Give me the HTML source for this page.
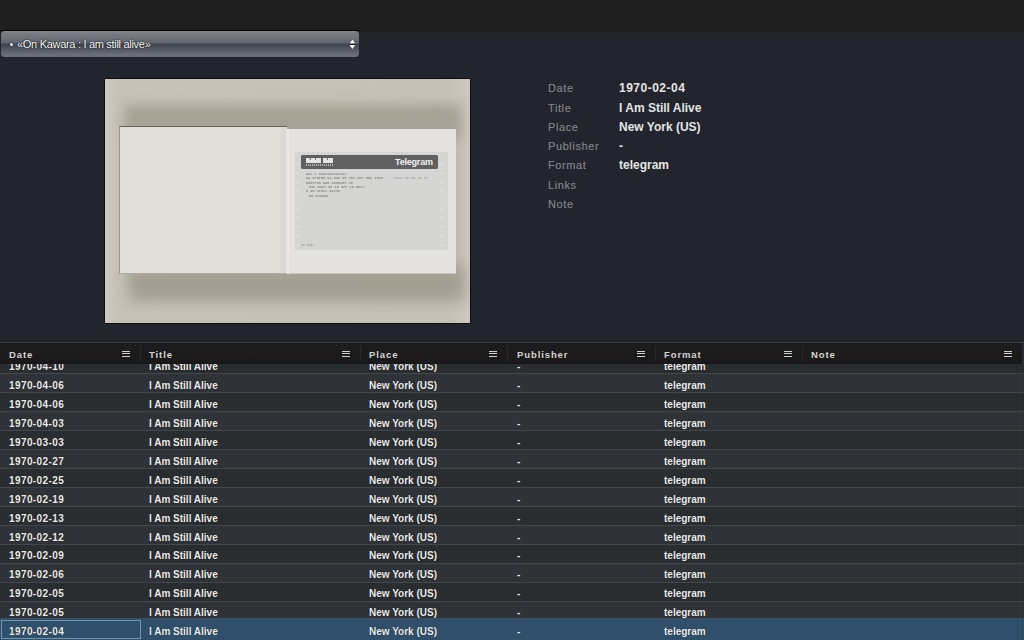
<!DOCTYPE html>
<html><head><meta charset="utf-8">
<style>
*{margin:0;padding:0;box-sizing:border-box}
html,body{width:1024px;height:640px;overflow:hidden;background:#22252d;font-family:"Liberation Sans",sans-serif}
#top{position:absolute;left:0;top:0;width:1024px;height:32px;background:#1f1f1f}
#topline{position:absolute;left:0;top:30px;width:359px;height:1px;background:#000}
#sel{position:absolute;left:1px;top:31px;width:358px;height:26px;border-radius:4px;
 background:linear-gradient(to bottom,#8a8c91 0px,#7b7e85 2px,#6c7079 8px,#5d626c 12px,#3f4450 13px,#444a55 15px,#5a5f69 20px,#6b7078 24px,#6b7078 26px);}
#sel .bul{position:absolute;left:9px;top:11.5px;width:3px;height:3px;border-radius:50%;background:#fff;box-shadow:0 0 1.5px #000}
#sel .t{position:absolute;left:16px;top:7px;font-size:11px;color:#f4f4f4;text-shadow:0 0 1.5px rgba(0,0,0,1),0 0 1px rgba(0,0,0,0.8);color:#fff;white-space:nowrap;letter-spacing:-0.3px;line-height:13px}
#sel .arr{position:absolute;left:347px;top:7px;width:9px;height:12px;filter:drop-shadow(0 0 0.6px rgba(0,0,0,0.8))}
#photo{position:absolute;left:104px;top:78px;width:367px;height:246px;border:1px solid #0e0f12;background:linear-gradient(to right,#cdc9c1 0,#c6c2b8 12px,#c5c0b6 340px,#ccc8bf 365px);overflow:hidden}
#meta{position:absolute;left:548px;top:81.4px;font-size:12px}
#meta .r{position:absolute;left:0;height:19px;white-space:nowrap}
#meta .l{position:absolute;left:0;top:1px;color:#7d8087;font-size:11px;letter-spacing:0.6px;text-shadow:0 0 0.5px rgba(125,128,135,0.6)}
#meta .v{position:absolute;left:71px;color:#e4e4e4;font-weight:bold}
#tbl{position:absolute;left:0;top:342px;width:1024px;height:298px;overflow:hidden}
#hdr{position:absolute;left:0;top:0;width:1024px;height:22px;background:linear-gradient(#1c1d20,#1d1a1a 55%,#19191b 92%,#141518 100%);border-top:1px solid #393c42}
.hc{position:absolute;top:1px;height:21px;font-size:9.5px;font-weight:bold;color:#d4d4d4;letter-spacing:0.9px;line-height:21px}
.ic{position:absolute;top:7.5px;width:8px;height:6px;border-top:1.5px solid #d0d0d0;border-bottom:1.5px solid #d0d0d0}
.ic:after{content:"";position:absolute;left:0;top:1.25px;width:8px;height:1.5px;background:#d0d0d0}
.sep{position:absolute;top:3px;width:1px;height:15px;background:#2a2a2b}
.row{position:absolute;left:0;width:1024px;height:19px;border-top:1px solid #43464a;font-size:10px;font-weight:bold;color:#ececec;letter-spacing:0px}
.row span{position:absolute;top:6px;white-space:nowrap;line-height:12px}
.row span:first-child{font-size:10px;letter-spacing:0.4px}
.odd{background:#2f3236}
.even{background:#2a2d30}
.selr{background:#2f4f6a;border-top-color:#3b4f60 !important;height:22px !important}
.selr span{top:7px !important}
.cellsel{position:absolute;left:1px;top:278px;width:140px;height:19px;border:1px solid #7395b0}
.row span{text-shadow:0 0 1px rgba(0,0,0,0.7)}
</style></head><body>
<div id="top"></div><div id="topline"></div>
<div id="sel"><div class="bul"></div><div class="t">&#171;On Kawara : I am still alive&#187;</div>
<svg class="arr" viewBox="0 0 9 12"><path d="M1.6 5.6 L7.2 5.6 L4.4 1.4 Z M1.4 6.9 L7.4 6.9 L4.4 10.9 Z" fill="#fff"/><rect x="1.8" y="6" width="5.4" height="0.9" fill="#000"/></svg></div>
<div id="photo">
 <div style="position:absolute;left:20px;top:26px;width:336px;height:34px;background:#a19a8e;filter:blur(6px);opacity:0.85"></div>
 <div style="position:absolute;left:24px;top:186px;width:336px;height:36px;background:#9a9489;filter:blur(7px);opacity:0.78"></div>
 <div style="position:absolute;left:22px;top:40px;width:334px;height:160px;background:#aba599;filter:blur(5px);opacity:0.35"></div>
 <div style="position:absolute;left:14px;top:47px;width:168px;height:148px;background:#dfded9;border-top:1px solid #67635c;border-left:1px solid #9a968f;border-bottom:1px solid #b0aba2"></div>
 <div style="position:absolute;left:172px;top:48px;width:8px;height:146px;background:linear-gradient(to right,rgba(0,0,0,0),rgba(0,0,0,0.03))"></div>
 <div style="position:absolute;left:182px;top:50px;width:169px;height:145px;background:#e3e2de;border-bottom:1px solid #c9c5bd"></div>
 <div style="position:absolute;left:182px;top:50px;width:2px;height:145px;background:#ebeae6"></div>
 <div style="position:absolute;left:190px;top:73px;width:153px;height:98px;background:#d5d5d3"></div>
 <div style="position:absolute;left:192px;top:84px;width:2px;height:2px;border-radius:1px;background:#e4e4e2"></div><div style="position:absolute;left:336px;top:84px;width:2px;height:2px;border-radius:1px;background:#e4e4e2"></div><div style="position:absolute;left:192px;top:93px;width:2px;height:2px;border-radius:1px;background:#e4e4e2"></div><div style="position:absolute;left:336px;top:93px;width:2px;height:2px;border-radius:1px;background:#e4e4e2"></div><div style="position:absolute;left:192px;top:102px;width:2px;height:2px;border-radius:1px;background:#e4e4e2"></div><div style="position:absolute;left:336px;top:102px;width:2px;height:2px;border-radius:1px;background:#e4e4e2"></div><div style="position:absolute;left:192px;top:111px;width:2px;height:2px;border-radius:1px;background:#e4e4e2"></div><div style="position:absolute;left:336px;top:111px;width:2px;height:2px;border-radius:1px;background:#e4e4e2"></div><div style="position:absolute;left:192px;top:120px;width:2px;height:2px;border-radius:1px;background:#e4e4e2"></div><div style="position:absolute;left:336px;top:120px;width:2px;height:2px;border-radius:1px;background:#e4e4e2"></div><div style="position:absolute;left:192px;top:129px;width:2px;height:2px;border-radius:1px;background:#e4e4e2"></div><div style="position:absolute;left:336px;top:129px;width:2px;height:2px;border-radius:1px;background:#e4e4e2"></div><div style="position:absolute;left:192px;top:138px;width:2px;height:2px;border-radius:1px;background:#e4e4e2"></div><div style="position:absolute;left:336px;top:138px;width:2px;height:2px;border-radius:1px;background:#e4e4e2"></div><div style="position:absolute;left:192px;top:147px;width:2px;height:2px;border-radius:1px;background:#e4e4e2"></div><div style="position:absolute;left:336px;top:147px;width:2px;height:2px;border-radius:1px;background:#e4e4e2"></div><div style="position:absolute;left:192px;top:156px;width:2px;height:2px;border-radius:1px;background:#e4e4e2"></div><div style="position:absolute;left:336px;top:156px;width:2px;height:2px;border-radius:1px;background:#e4e4e2"></div><div style="position:absolute;left:192px;top:165px;width:2px;height:2px;border-radius:1px;background:#e4e4e2"></div><div style="position:absolute;left:336px;top:165px;width:2px;height:2px;border-radius:1px;background:#e4e4e2"></div>
 <div style="position:absolute;left:196px;top:76px;width:137px;height:14px;background:#606060;border-radius:1.5px"></div>
 <div style="position:absolute;left:290px;top:77px;font-size:9px;font-weight:bold;color:#f2f2f2;letter-spacing:-0.2px;line-height:12px">Telegram</div>
 <div style="position:absolute;left:201px;top:79px;width:15px;height:5px;background:#e6e4e4"></div>
 <div style="position:absolute;left:218px;top:79px;width:10px;height:5px;background:#e6e4e4"></div>
 <div style="position:absolute;left:205px;top:79px;width:1px;height:2px;background:#777"></div>
 <div style="position:absolute;left:210px;top:79px;width:1px;height:2px;background:#777"></div>
 <div style="position:absolute;left:222px;top:79px;width:1px;height:2px;background:#777"></div>
 <div style="position:absolute;left:201px;top:85px;width:27px;height:2px;background:repeating-linear-gradient(to right,#b4b2b2 0 1.5px,transparent 1.5px 2px)"></div>
 <div style="position:absolute;left:201px;top:93px;font-family:'Liberation Mono',monospace;font-size:3.4px;line-height:4px;color:#8a8a88;white-space:pre;font-weight:bold;letter-spacing:0.1px;filter:blur(0.2px)">WA1 Y 2U01T0C3U4191</div>
 <div style="position:absolute;left:201px;top:97px;font-family:'Liberation Mono',monospace;font-size:3.4px;line-height:4px;color:#8a8a88;white-space:pre;font-weight:bold;letter-spacing:0.1px;filter:blur(0.2px)">NA APRPOM 0A NOR NE 7O2 OMT NEA JOHN</div>
 <div style="position:absolute;left:201px;top:102px;font-family:'Liberation Mono',monospace;font-size:3.4px;line-height:4px;color:#8a8a88;white-space:pre;font-weight:bold;letter-spacing:0.1px;filter:blur(0.2px)">NEMTPOR NOE ODOHOOF 4H</div>
 <div style="position:absolute;left:204px;top:106px;font-family:'Liberation Mono',monospace;font-size:3.4px;line-height:4px;color:#8a8a88;white-space:pre;font-weight:bold;letter-spacing:0.1px;filter:blur(0.2px)">UOZ BAUT NE 1E APF 2H HELT</div>
 <div style="position:absolute;left:201px;top:110px;font-family:'Liberation Mono',monospace;font-size:3.4px;line-height:4px;color:#8a8a88;white-space:pre;font-weight:bold;letter-spacing:0.1px;filter:blur(0.2px)">I AM STILL ALIVE</div>
 <div style="position:absolute;left:204px;top:115px;font-family:'Liberation Mono',monospace;font-size:3.4px;line-height:4px;color:#8a8a88;white-space:pre;font-weight:bold;letter-spacing:0.1px;filter:blur(0.2px)">ON KAWARA</div>
 <div style="position:absolute;left:289px;top:97px;font-family:'Liberation Mono',monospace;font-size:3.4px;line-height:4px;color:#a8a8a6;white-space:pre;font-weight:bold;letter-spacing:0.1px;filter:blur(0.2px)">1970 FE 05 AM 01</div>
 <div style="position:absolute;left:196px;top:165px;font-family:'Liberation Mono',monospace;font-size:3px;line-height:4px;color:#9a9a98;white-space:pre;font-weight:bold;letter-spacing:0.1px;filter:blur(0.2px)">WU 1281</div>
</div>
<div id="meta">
 <div class="r" style="top:0"><span class="l">Date</span><span class="v" style="letter-spacing:0.5px">1970-02-04</span></div>
 <div class="r" style="top:19.25px"><span class="l">Title</span><span class="v">I Am Still Alive</span></div>
 <div class="r" style="top:38.5px"><span class="l">Place</span><span class="v">New York (US)</span></div>
 <div class="r" style="top:57.75px"><span class="l">Publisher</span><span class="v">-</span></div>
 <div class="r" style="top:77px"><span class="l">Format</span><span class="v">telegram</span></div>
 <div class="r" style="top:96.25px"><span class="l">Links</span></div>
 <div class="r" style="top:115.5px"><span class="l">Note</span></div>
</div>
<div id="tbl">
 <div id="rows">
<div class="row even" style="top:12px"><span style="left:9px">1970-04-10</span><span style="left:149px">I Am Still Alive</span><span style="left:369px">New York (US)</span><span style="left:517px">-</span><span style="left:664px">telegram</span></div>
<div class="row odd" style="top:31px"><span style="left:9px">1970-04-06</span><span style="left:149px">I Am Still Alive</span><span style="left:369px">New York (US)</span><span style="left:517px">-</span><span style="left:664px">telegram</span></div>
<div class="row even" style="top:50px"><span style="left:9px">1970-04-06</span><span style="left:149px">I Am Still Alive</span><span style="left:369px">New York (US)</span><span style="left:517px">-</span><span style="left:664px">telegram</span></div>
<div class="row odd" style="top:69px"><span style="left:9px">1970-04-03</span><span style="left:149px">I Am Still Alive</span><span style="left:369px">New York (US)</span><span style="left:517px">-</span><span style="left:664px">telegram</span></div>
<div class="row even" style="top:88px"><span style="left:9px">1970-03-03</span><span style="left:149px">I Am Still Alive</span><span style="left:369px">New York (US)</span><span style="left:517px">-</span><span style="left:664px">telegram</span></div>
<div class="row odd" style="top:107px"><span style="left:9px">1970-02-27</span><span style="left:149px">I Am Still Alive</span><span style="left:369px">New York (US)</span><span style="left:517px">-</span><span style="left:664px">telegram</span></div>
<div class="row even" style="top:126px"><span style="left:9px">1970-02-25</span><span style="left:149px">I Am Still Alive</span><span style="left:369px">New York (US)</span><span style="left:517px">-</span><span style="left:664px">telegram</span></div>
<div class="row odd" style="top:145px"><span style="left:9px">1970-02-19</span><span style="left:149px">I Am Still Alive</span><span style="left:369px">New York (US)</span><span style="left:517px">-</span><span style="left:664px">telegram</span></div>
<div class="row even" style="top:164px"><span style="left:9px">1970-02-13</span><span style="left:149px">I Am Still Alive</span><span style="left:369px">New York (US)</span><span style="left:517px">-</span><span style="left:664px">telegram</span></div>
<div class="row odd" style="top:183px"><span style="left:9px">1970-02-12</span><span style="left:149px">I Am Still Alive</span><span style="left:369px">New York (US)</span><span style="left:517px">-</span><span style="left:664px">telegram</span></div>
<div class="row even" style="top:202px"><span style="top:5px;left:9px">1970-02-09</span><span style="top:5px;left:149px">I Am Still Alive</span><span style="top:5px;left:369px">New York (US)</span><span style="top:5px;left:517px">-</span><span style="top:5px;left:664px">telegram</span></div>
<div class="row odd" style="top:221px"><span style="top:5px;left:9px">1970-02-06</span><span style="top:5px;left:149px">I Am Still Alive</span><span style="top:5px;left:369px">New York (US)</span><span style="top:5px;left:517px">-</span><span style="top:5px;left:664px">telegram</span></div>
<div class="row even" style="top:240px"><span style="top:5px;left:9px">1970-02-05</span><span style="top:5px;left:149px">I Am Still Alive</span><span style="top:5px;left:369px">New York (US)</span><span style="top:5px;left:517px">-</span><span style="top:5px;left:664px">telegram</span></div>
<div class="row odd" style="top:259px"><span style="top:5px;left:9px">1970-02-05</span><span style="top:5px;left:149px">I Am Still Alive</span><span style="top:5px;left:369px">New York (US)</span><span style="top:5px;left:517px">-</span><span style="top:5px;left:664px">telegram</span></div>
<div class="row selr" style="top:276px"><span style="left:9px">1970-02-04</span><span style="left:149px">I Am Still Alive</span><span style="left:369px">New York (US)</span><span style="left:517px">-</span><span style="left:664px">telegram</span></div>
<div class="cellsel"></div></div>
 <div style="position:absolute;left:1017px;top:21px;width:1px;height:277px;background:rgba(0,0,0,0.08)"></div><div style="position:absolute;left:1022px;top:21px;width:1px;height:277px;background:rgba(0,0,0,0.1)"></div>
 <div id="hdr">
  <div class="hc" style="left:9px">Date</div><div class="ic" style="left:122px"></div><div class="sep" style="left:140px"></div>
  <div class="hc" style="left:149px">Title</div><div class="ic" style="left:342px"></div><div class="sep" style="left:360px"></div>
  <div class="hc" style="left:369px">Place</div><div class="ic" style="left:489px"></div><div class="sep" style="left:507px"></div>
  <div class="hc" style="left:517px">Publisher</div><div class="ic" style="left:637px"></div><div class="sep" style="left:655px"></div>
  <div class="hc" style="left:664px">Format</div><div class="ic" style="left:784px"></div><div class="sep" style="left:802px"></div>
  <div class="hc" style="left:811px">Note</div><div class="ic" style="left:1004px"></div><div style="position:absolute;left:1022px;top:0;width:2px;height:21px;background:#2a2d31"></div>
 </div>
</div>
</body></html>
